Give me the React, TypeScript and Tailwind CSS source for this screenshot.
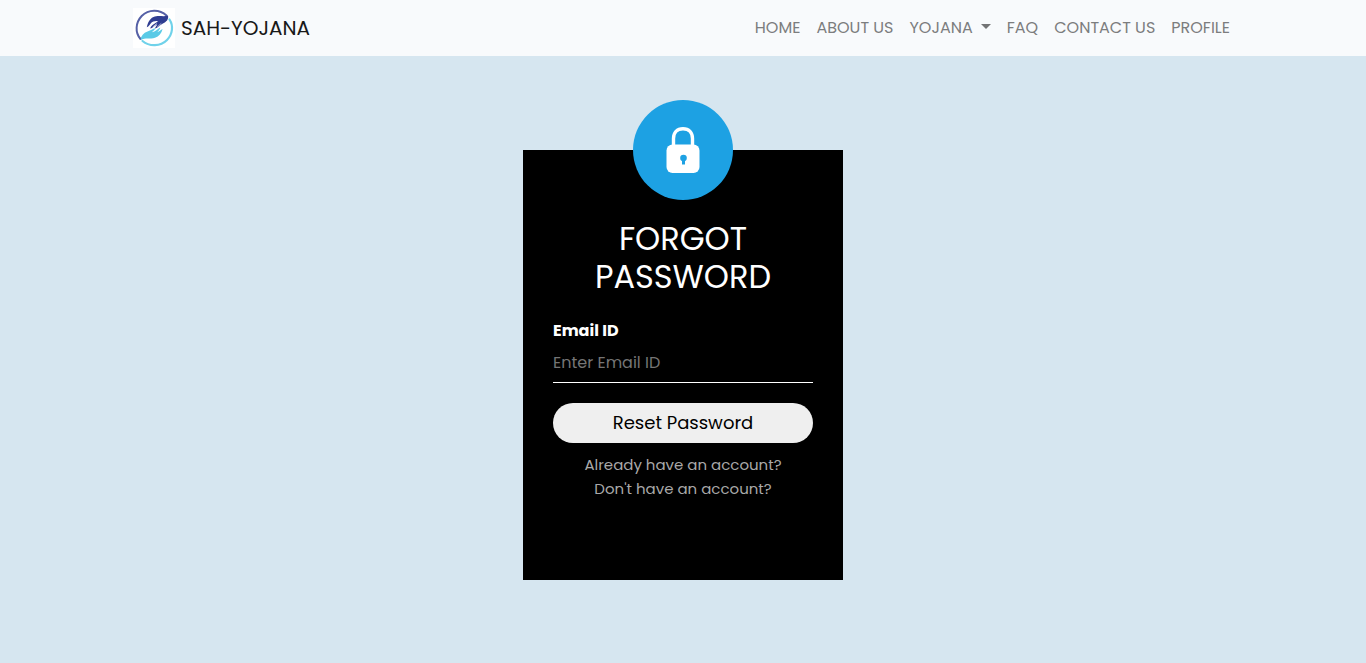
import type { ReactNode } from 'react';

function BrandMark() {
  return (
    <svg viewBox="0 0 42 40" className="h-10 w-[42px] shrink-0" aria-hidden="true">
      <rect width="42" height="40" fill="#ffffff" />
      <path d="M7.500 31C1.800 24.500 2.500 14.500 8.700 8C15.500 1.200 26.500 1 33.500 7.600" fill="none" stroke="#5560a6" strokeWidth="2" strokeLinecap="round" />
      <path d="M36.500 11.500C40.500 17.500 39.800 26 34 32C27.500 38.600 16.500 38.800 9.500 33" fill="none" stroke="#70d2ea" strokeWidth="2.200" strokeLinecap="round" />
      <path d="M35 7.500C30 9.200 25.500 6.800 20.500 9C16 11 14.800 15.500 13.800 19.200C16 18.800 16.800 15.800 18.800 14.200C20.800 12.800 23 13.200 25 13C22.500 15.800 18.500 16.200 17.200 20.600C19.800 20.200 21.200 17.400 24.200 16.200C23.600 18 22.300 19 22 20.600C25 20 26.500 17.400 29.500 15.800C33.500 13.800 35.800 11.500 35 7.500Z" fill="#2f3d91" />
      <path d="M7.500 32C8 27.800 10.500 25 14.500 23.600C18 22.200 19.600 20.800 22.300 20.200C21.800 22 20 22.800 19 24.200C22.500 23.600 24.500 20.800 27.200 19.400C27.400 21.400 25.200 22.600 24.300 24.200C26.500 23.600 27.500 21.800 29.600 21C28.500 25.200 26 28.600 22 29.800C17 31.400 12.500 29.600 7.500 32Z" fill="#5acae6" />
      <path d="M20 18.800L23.500 15.800M24.500 18.800L28 15.600" fill="none" stroke="#ffffff" strokeWidth=".6" strokeLinecap="round" />
    </svg>
  );
}

function LockIcon() {
  return (
    <svg viewBox="0 0 100 100" className="size-[100px]" aria-hidden="true">
      <circle cx="50" cy="50" r="50" fill="#1da1e3" />
      <path d="M40.500 46V38.500C40.500 32.500 44 28.700 50 28.700S59.500 32.500 59.500 38.500V46" fill="none" stroke="#ffffff" strokeWidth="3.400" />
      <rect x="33.500" y="44.500" width="33" height="28.500" rx="6" fill="#ffffff" />
      <circle cx="50.500" cy="58" r="3.300" fill="#1da1e3" />
      <path d="M49 58h3v6.500h-3z" fill="#1da1e3" />
    </svg>
  );
}

function NavLink({ children }: { children: ReactNode }) {
  return (
    <a href="#" className="flex items-center p-2 text-[16px] leading-6 text-[#7c7d7e]">
      {children}
    </a>
  );
}

export default function App() {
  return (
    <div className="min-h-screen bg-[#d6e6f0] font-['Poppins','Inter',sans-serif]">
      <header className="bg-[#f8fafc]">
        <nav className="mx-auto flex min-h-14 max-w-[1110px] flex-wrap items-center justify-between">
          <a href="#" className="flex items-center gap-1.5 pl-[5px] text-[20px] leading-[30px] text-[#191919]">
            <BrandMark />
            SAH-YOJANA
          </a>
          <div className="flex flex-wrap">
            <NavLink>HOME</NavLink>
            <NavLink>ABOUT US</NavLink>
            <NavLink>
              YOJANA
              <svg viewBox="0 0 10 5" className="mb-1 ml-2 h-[5px] w-2.5" aria-hidden="true">
                <path d="M0 0h10L5 5z" fill="#737475" />
              </svg>
            </NavLink>
            <NavLink>FAQ</NavLink>
            <NavLink>CONTACT US</NavLink>
            <NavLink>PROFILE</NavLink>
          </div>
        </nav>
      </header>
      <main className="flex flex-col items-center px-4 pt-11 pb-20">
        <section className="mt-[50px] flex min-h-[430px] w-full max-w-80 flex-col bg-black px-[30px] text-white">
          <div className="-mt-[50px] flex justify-center">
            <LockIcon />
          </div>
          <h1 className="mt-5 text-center text-[32px] leading-[38px] font-normal">
            FORGOT PASSWORD
          </h1>
          <form className="mt-[23px] flex flex-col" onSubmit={(e) => e.preventDefault()}>
            <label htmlFor="email" className="text-[16px] leading-6 font-bold">
              Email ID
            </label>
            <input
              id="email"
              type="email"
              placeholder="Enter Email ID"
              className="h-10 w-full border-b border-white bg-transparent text-[16px] text-white outline-none placeholder:text-[#757575]"
            />
            <button type="submit" className="mt-5 h-10 rounded-full bg-[#efefef] pb-0.5 text-[18px] text-black">
              Reset Password
            </button>
          </form>
          <div className="mt-2.5 flex flex-col items-center text-[15px] leading-6 text-[#a9a9a9]">
            <a href="#">Already have an account?</a>
            <a href="#">Don't have an account?</a>
          </div>
        </section>
      </main>
    </div>
  );
}
